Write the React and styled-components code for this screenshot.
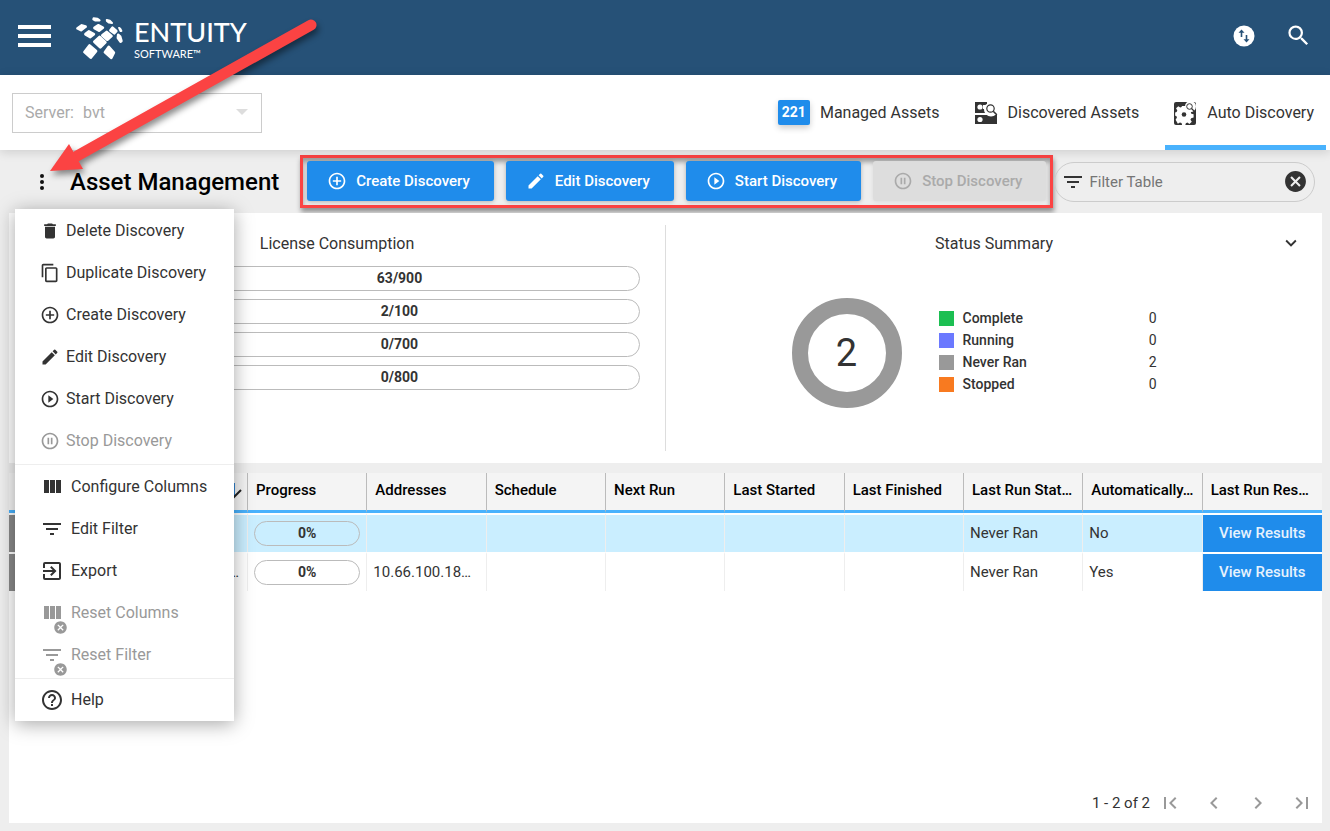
import React from "react"
import styled, { createGlobalStyle } from "styled-components"
import {
  MdAddCircleOutline,
  MdCancel,
  MdChevronLeft,
  MdChevronRight,
  MdContentCopy,
  MdDelete,
  MdEdit,
  MdExitToApp,
  MdExpandMore,
  MdFilterList,
  MdFirstPage,
  MdHelpOutline,
  MdLastPage,
  MdPauseCircleOutline,
  MdPlayCircleOutline,
  MdSearch,
} from "react-icons/md"

const ColumnsIcon = () => (
  <svg viewBox="0 0 24 24" width="24" height="24" fill="currentColor">
    <path d="M10 18h5V5h-5v13zm-6 0h5V5H4v13zM16 5v13h5V5h-5z" />
  </svg>
)

const TransferIcon = () => (
  <svg viewBox="0 0 22 22" width="22" height="22">
    <circle cx="11" cy="11" r="10.5" fill="#fff" />
    <path
      d="M8.500 12V6.500M13.500 10v5.500"
      stroke="#265177"
      strokeWidth="1.600"
    />
    <path d="M5.500 7.800L8.500 4.500l3 3.300zM10.500 14.200l3 3.300 3-3.300z" fill="#265177" />
  </svg>
)

const DiscoveredIcon = () => (
  <svg viewBox="0 0 24 24" width="24" height="24">
    <path fill="#333" d="M1 1h12v11H1zM1 14h13l3-1h6v10H1z" />
    <circle cx="6" cy="6" r="2.6" fill="#fff" />
    <path fill="#fff" d="M9 4h3v4h-3z" />
    <circle cx="6" cy="18.500" r="2.600" fill="#fff" />
    <circle cx="17" cy="8.500" r="7" fill="#fff" />
    <circle cx="16.500" cy="7.500" r="3.700" fill="none" stroke="#333" strokeWidth="1.200" />
    <path d="M19.200 10.200l3.600 3.600" stroke="#333" strokeWidth="1.600" />
  </svg>
)

const AutoIcon = () => (
  <svg viewBox="0 0 24 24" width="24" height="24">
    <rect x="1" y="1" width="22" height="23" rx="2" fill="#333" />
    <path
      fill="#fff"
      d="M9 5h4l.6 2.600 1.800.8 2.400-1.400 2.600 2.800-1.500 2.300.6 1.600 2.500.6v3.600l-2.700.6-.8 1.700 1.500 2.300-2.600 2.400-2.300-1.500-1.700.7-.6 1.900H9.200l-.6-2-1.800-.8-2.300 1.400L2 20.200l1.500-2.300-.7-1.700-1.300-.4v-3.600l1.600-.5.8-1.800L2.500 7.600 5 5.300l2.200 1.500 1.500-.6z"
      transform="translate(.8 .5) scale(.9)"
    />
    <circle cx="11" cy="13.500" r="2.300" fill="#333" />
    <circle cx="17.500" cy="5.500" r="5.500" fill="#fff" />
    <circle cx="16.500" cy="5.500" r="2.800" fill="none" stroke="#333" />
    <path d="M18.500 7.500l3.500 3.500" stroke="#333" strokeWidth="1.300" />
  </svg>
)

const LogoMark = () => (
  <svg
    viewBox="0 0 50 46"
    width="50"
    height="46"
    fill="#fff"
    stroke="#fff"
    strokeWidth="2.800"
    strokeLinejoin="round"
  >
    <path d="M13.500 30.500L20 36L14.700 42.500L8.500 37Z" />
    <path d="M32.700 32L37.800 37.700L35.200 42.800L29 37.300Z" />
    <path d="M23.600 22L29.300 27.300L24.300 32.300L18.400 26.800Z" />
    <path d="M30.700 17L35.400 21L31.300 24.600L26.400 20.400Z" />
    <path d="M36.500 12.800L40.200 16L38.300 18.200L34.500 15.400Z" />
    <path d="M42.300 20L44 21.500L45.300 26L44.500 26.500L42 23Z" />
    <path d="M43 12.800L44.200 13.500L45.500 16L44.500 16Z" strokeWidth="1.800" />
    <path d="M12.800 16.500L17.800 19.200L14.300 22L9.500 19.200Z" />
    <path d="M22.200 10.300L26.800 12.700L23 15.500L18.500 13Z" />
    <path d="M5.800 10.500L9.500 11.700L5 15L1.600 13.300Z" />
    <path d="M17.600 3.300L21.500 3.800L23.600 5.400L19.500 5.600L17.300 4.300Z" strokeWidth="2" />
    <path d="M30.800 5L33.800 5.800L36 8L33 7.600L30.900 6Z" strokeWidth="2" />
  </svg>
)

const tabs = [
  { label: "Managed Assets", count: 221 },
  { label: "Discovered Assets", icon: <DiscoveredIcon /> },
  { label: "Auto Discovery", icon: <AutoIcon />, active: true },
]

const actions = [
  { label: "Create Discovery", icon: <MdAddCircleOutline /> },
  { label: "Edit Discovery", icon: <MdEdit /> },
  { label: "Start Discovery", icon: <MdPlayCircleOutline /> },
  { label: "Stop Discovery", icon: <MdPauseCircleOutline />, disabled: true },
]

const menuGroups = [
  {
    id: "discovery",
    items: [
      { label: "Delete Discovery", icon: <MdDelete /> },
      { label: "Duplicate Discovery", icon: <MdContentCopy /> },
      ...actions,
    ],
  },
  {
    id: "table",
    wide: true,
    items: [
      { label: "Configure Columns", icon: <ColumnsIcon /> },
      { label: "Edit Filter", icon: <MdFilterList /> },
      { label: "Export", icon: <MdExitToApp /> },
      { label: "Reset Columns", icon: <ColumnsIcon />, disabled: true, reset: true },
      { label: "Reset Filter", icon: <MdFilterList />, disabled: true, reset: true },
    ],
  },
  {
    id: "help",
    wide: true,
    items: [{ label: "Help", icon: <MdHelpOutline /> }],
  },
]

const licenses = ["63/900", "2/100", "0/700", "0/800"]

const statuses = [
  { label: "Complete", color: "#1cbf52", value: 0 },
  { label: "Running", color: "#6b79ff", value: 0 },
  { label: "Never Ran", color: "#999", value: 2 },
  { label: "Stopped", color: "#f87a20", value: 0 },
]

const columns = [
  "Progress",
  "Addresses",
  "Schedule",
  "Next Run",
  "Last Started",
  "Last Finished",
  "Last Run Stat…",
  "Automatically…",
  "Last Run Res…",
]

const rows = [
  { id: 1, selected: true, addresses: "", auto: "No" },
  { id: 2, addresses: "10.66.100.18…", auto: "Yes" },
]

const App = () => (
  <Page>
    <GlobalStyle />
    <Header>
      <IconButton aria-label="Main menu">
        <Burger>
          <i />
          <i />
          <i />
        </Burger>
      </IconButton>
      <Logo href="#home">
        <LogoMark />
        <LogoText>
          <strong>ENTUITY</strong>
          <span>SOFTWARE™</span>
        </LogoText>
      </Logo>
      <HeaderTools>
        <IconButton aria-label="Transfers">
          <TransferIcon />
        </IconButton>
        <IconButton aria-label="Search">
          <MdSearch size={27} />
        </IconButton>
      </HeaderTools>
    </Header>

    <TabBar>
      <ServerField>
        <label htmlFor="server">Server:</label>
        <select id="server" disabled defaultValue="bvt">
          <option>bvt</option>
        </select>
      </ServerField>
      <Tabs>
        {tabs.map(tab => (
          <Tab href="#assets" key={tab.label} $active={tab.active}>
            {tab.count ? <Count>{tab.count}</Count> : tab.icon}
            {tab.label}
          </Tab>
        ))}
      </Tabs>
    </TabBar>

    <Toolbar>
      <MenuAnchor>
        <Kebab aria-label="Asset menu">
          <i />
          <i />
          <i />
        </Kebab>
        <Menu>
          {menuGroups.map(group => (
            <MenuGroup key={group.id}>
              {group.items.map(item => (
                <MenuItem key={item.label} disabled={item.disabled} $wide={group.wide}>
                  <MenuIcon $wide={group.wide}>
                    {item.icon}
                    {item.reset && <MdCancel className="badge" />}
                  </MenuIcon>
                  {item.label}
                </MenuItem>
              ))}
            </MenuGroup>
          ))}
        </Menu>
      </MenuAnchor>
      <Title>Asset Management</Title>
      <Actions>
        {actions.map(action => (
          <ActionButton key={action.label} disabled={action.disabled}>
            {action.icon}
            {action.label}
          </ActionButton>
        ))}
      </Actions>
      <Filter>
        <MdFilterList size={24} />
        <input aria-label="Filter Table" placeholder="Filter Table" />
        <IconButton aria-label="Clear filter">
          <MdCancel size={25} />
        </IconButton>
      </Filter>
    </Toolbar>

    <Summary>
      <SummaryPane>
        <PaneTitle>License Consumption</PaneTitle>
        <Bars>
          {licenses.map(value => (
            <Pill key={value}>{value}</Pill>
          ))}
        </Bars>
      </SummaryPane>
      <SummaryPane>
        <PaneTitle>Status Summary</PaneTitle>
        <Collapse aria-label="Collapse summary">
          <MdExpandMore size={22} />
        </Collapse>
        <Status>
          <Donut>2</Donut>
          <Legend>
            {statuses.map(status => (
              <LegendRow key={status.label} $color={status.color}>
                <i />
                <strong>{status.label}</strong>
                <span>{status.value}</span>
              </LegendRow>
            ))}
          </Legend>
        </Status>
      </SummaryPane>
    </Summary>

    <TableCard>
      <Table>
        <thead>
          <tr>
            <th className="strip" />
            <th className="name">
              <svg width="14" height="18" viewBox="0 0 14 18" fill="none" stroke="#222" strokeWidth="2">
                <path d="M5 1v14" stroke="#3182ce" />
                <path d="M0 10l5 5 7-7" />
              </svg>
            </th>
            {columns.map(column => (
              <th key={column}>{column}</th>
            ))}
          </tr>
        </thead>
        <tbody>
          {rows.map(row => (
            <Row key={row.id} $selected={row.selected}>
              <td className="strip" />
              <td className="name">{row.selected ? "" : "…"}</td>
              <td>
                <Pill>0%</Pill>
              </td>
              <td>{row.addresses}</td>
              <td />
              <td />
              <td />
              <td />
              <td>Never Ran</td>
              <td>{row.auto}</td>
              <td className="results">
                <ResultsButton>View Results</ResultsButton>
              </td>
            </Row>
          ))}
        </tbody>
      </Table>
      <Pager>
        <span>1 - 2 of 2</span>
        <IconButton aria-label="First page">
          <MdFirstPage size={24} />
        </IconButton>
        <IconButton aria-label="Previous page">
          <MdChevronLeft size={24} />
        </IconButton>
        <IconButton aria-label="Next page">
          <MdChevronRight size={24} />
        </IconButton>
        <IconButton aria-label="Last page">
          <MdLastPage size={24} />
        </IconButton>
      </Pager>
    </TableCard>

    <Pointer viewBox="0 0 330 190" width="330" height="190">
      <path d="M77 156L311 25" stroke="#fb4343" strokeWidth="11" strokeLinecap="round" />
      <path d="M50 171L69 144L83 169Z" fill="#fb4343" />
    </Pointer>
  </Page>
)

const GlobalStyle = createGlobalStyle`
  * {
    box-sizing: border-box;
  }
  body {
    margin: 0;
    background: #eee;
    color: #333;
    font-family: Roboto, "Liberation Sans", sans-serif;
    font-size: 16px;
  }
  button,
  input,
  select {
    font: inherit;
    color: inherit;
    border: 0;
    padding: 0;
    background: none;
  }
  a {
    color: inherit;
    text-decoration: none;
  }
`

const Page = styled.div`
  position: relative;
  display: flex;
  flex-direction: column;
  min-height: 100vh;
`

const Header = styled.header`
  display: flex;
  align-items: center;
  height: 75px;
  padding: 0 18px 4px;
  background: #265177;
  color: #fff;
`

const IconButton = styled.button`
  display: flex;
`

const Burger = styled.span`
  display: grid;
  gap: 5px;
  width: 33px;
  i {
    height: 4px;
    background: #fff;
  }
`

const Logo = styled.a`
  display: flex;
  align-items: center;
  gap: 8px;
  margin-left: 25px;
  padding-top: 5px;
`

const LogoText = styled.span`
  display: flex;
  flex-direction: column;
  font-family: Lato, sans-serif;
  strong {
    font-size: 27px;
    font-weight: 500;
    line-height: 32px;
  }
  span {
    font-size: 11px;
    line-height: 12px;
  }
`

const HeaderTools = styled.div`
  display: flex;
  align-items: center;
  gap: 30px;
  margin-left: auto;
`

const TabBar = styled.div`
  position: relative;
  display: flex;
  justify-content: space-between;
  height: 75px;
  padding: 0 4px 0 12px;
  background: #fff;
  box-shadow: 0 2px 10px rgba(0, 0, 0, 0.14);
`

const ServerField = styled.div`
  display: flex;
  align-items: center;
  gap: 9px;
  width: 250px;
  height: 40px;
  margin-top: 18px;
  padding: 0 13px 2px 12px;
  border: 1px solid #ccc;
  color: #aaa;
  select {
    flex: 1;
    appearance: none;
    color: #aaa;
    opacity: 1;
  }
  &::after {
    content: "";
    border: 6px solid transparent;
    border-top-color: #ddd;
    border-bottom: 0;
  }
`

const Tabs = styled.nav`
  display: flex;
  gap: 14px;
`

const Tab = styled.a`
  display: flex;
  align-items: center;
  gap: 10px;
  padding: 5px 12px 0 8px;
  border-bottom: 5px solid ${props => (props.$active ? "#49b2fd" : "transparent")};
`

const Count = styled.span`
  padding: 0 4px;
  border-radius: 2px;
  background: #1f8ceb;
  color: #fff;
  font-size: 14px;
  font-weight: 700;
  line-height: 25px;
  box-shadow: 0 3px 6px rgba(0, 0, 0, 0.2);
`

const Toolbar = styled.div`
  display: flex;
  align-items: center;
  height: 63px;
  padding: 0 15px;
`

const MenuAnchor = styled.div`
  position: relative;
  padding-left: 20px;
`

const Kebab = styled.button`
  display: grid;
  gap: 2px;
  width: 14px;
  justify-content: center;
  i {
    width: 4px;
    height: 4px;
    border-radius: 50%;
    background: #111;
  }
`

const Menu = styled.div`
  position: absolute;
  z-index: 2;
  top: 35px;
  left: 0;
  width: 219px;
  background: #fff;
  box-shadow: 0 3px 18px rgba(0, 0, 0, 0.35);
`

const MenuGroup = styled.div`
  padding: 1px 0 2px;
  & + & {
    border-top: 1px solid #eee;
  }
  &:last-child {
    padding: 0;
  }
`

const MenuItem = styled.button`
  display: flex;
  align-items: center;
  gap: ${props => (props.$wide ? "7px" : "6px")};
  width: 100%;
  height: 42px;
  padding-left: 25px;
  white-space: nowrap;
  &:disabled {
    color: #999;
  }
`

const MenuIcon = styled.span`
  position: relative;
  display: flex;
  font-size: ${props => (props.$wide ? "24px" : "20px")};
  .badge {
    position: absolute;
    right: -4px;
    bottom: -10px;
    font-size: 15px;
  }
`

const Title = styled.h1`
  margin: 0 21px;
  color: #000;
  font-size: 24px;
  font-weight: 500;
  line-height: 28px;
  white-space: nowrap;
`

const Actions = styled.div`
  display: flex;
  gap: 12px;
  padding: 3px 4px 4px;
  border: 3px solid #fb4343;
  box-shadow: 1px 4px 5px rgba(0, 0, 0, 0.4), inset 0 4px 5px rgba(0, 0, 0, 0.35);
`

const ActionButton = styled.button`
  display: flex;
  align-items: center;
  gap: 9px;
  height: 40px;
  padding: 0 24px 0 20px;
  border-radius: 3px;
  background: #1f8ceb;
  color: #fff;
  font-size: 15px;
  font-weight: 500;
  white-space: nowrap;
  box-shadow: 0 1px 4px rgba(0, 0, 0, 0.25);
  svg {
    width: 20px;
    height: 20px;
  }
  &:disabled {
    background: #ddd;
    color: #aaa;
    box-shadow: 0 1px 4px rgba(0, 0, 0, 0.08);
  }
`

const Filter = styled.div`
  flex: 1;
  display: flex;
  align-items: center;
  gap: 4px;
  min-width: 0;
  height: 40px;
  margin-left: 1px;
  padding: 0 6px;
  border: 1px solid #ccc;
  border-radius: 20px;
  input {
    flex: 1;
    min-width: 0;
    outline: 0;
    font-size: 15px;
  }
  input::placeholder {
    color: #757575;
  }
`

const Summary = styled.section`
  display: flex;
  height: 250px;
  margin: 0 8px 10px 9px;
  padding: 12px 0;
  background: #fff;
`

const SummaryPane = styled.div`
  position: relative;
  flex: 1;
  & + & {
    border-left: 1px solid #ddd;
  }
`

const PaneTitle = styled.h2`
  margin: 9px 0 12px;
  font-size: 16px;
  font-weight: 400;
  line-height: 20px;
  text-align: center;
`

const Bars = styled.div`
  display: grid;
  gap: 8px;
  padding: 0 25px 0 150px;
`

const Pill = styled.div`
  height: 25px;
  border: 1px solid #bbb;
  border-radius: 13px;
  font-size: 14px;
  font-weight: 700;
  line-height: 23px;
  text-align: center;
`

const Collapse = styled.button`
  position: absolute;
  top: 7px;
  right: 20px;
  display: flex;
`

const Status = styled.div`
  display: flex;
  align-items: center;
  justify-content: center;
  gap: 37px;
  padding: 32px 40px 0 0;
`

const Donut = styled.div`
  display: flex;
  align-items: center;
  justify-content: center;
  width: 110px;
  height: 110px;
  border: 16px solid #999;
  border-radius: 50%;
  font-size: 38px;
`

const Legend = styled.div`
  width: 218px;
  padding-bottom: 4px;
`

const LegendRow = styled.div`
  display: flex;
  align-items: center;
  gap: 9px;
  font-size: 14px;
  line-height: 22px;
  i {
    width: 15px;
    height: 15px;
    background: ${props => props.$color};
  }
  strong {
    flex: 1;
    font-weight: 500;
  }
`

const TableCard = styled.section`
  flex: 1;
  display: flex;
  flex-direction: column;
  justify-content: space-between;
  margin: 0 8px 8px 9px;
  background: #fff;
`

const Table = styled.table`
  width: 100%;
  table-layout: fixed;
  border-spacing: 0;
  th {
    height: 40px;
    padding: 0 4px 3px 8px;
    border-right: 1px solid #bbb;
    border-bottom: 3px solid #49b2fd;
    background: #f4f4f4;
    color: #000;
    font-size: 15px;
    font-weight: 500;
    text-align: left;
    white-space: nowrap;
  }
  td {
    height: 39px;
    padding: 0 6px 1px;
    border-top: 2px solid #fff;
    border-right: 1px solid #eee;
    font-size: 15px;
    white-space: nowrap;
  }
  th:last-child,
  td:last-child {
    border-right: 0;
  }
  .strip {
    width: 7px;
    padding: 0;
    border-right: 0;
  }
  td.strip {
    background: #8a8a8a;
  }
  .name {
    width: 232px;
    padding-right: 8px;
    text-align: right;
  }
  th.name {
    padding-right: 4px;
    svg {
      vertical-align: middle;
    }
  }
  td.results {
    padding: 0;
  }
`

const Row = styled.tr`
  background: ${props => (props.$selected ? "#caeeff" : "#fff")};
`

const ResultsButton = styled.button`
  display: block;
  width: 100%;
  height: 37px;
  padding-bottom: 2px;
  background: #1f8ceb;
  color: #e6f2fd;
  font-weight: 500;
`

const Pager = styled.div`
  display: flex;
  align-items: center;
  gap: 20px;
  padding: 0 8px 8px;
  justify-content: flex-end;
  color: #999;
  font-size: 15px;
  span {
    margin-right: -12px;
    color: #333;
  }
`

const Pointer = styled.svg`
  position: absolute;
  z-index: 3;
  top: 0;
  left: 0;
  pointer-events: none;
  filter: drop-shadow(2px 4px 3px rgba(0, 0, 0, 0.45));
`

export default App
